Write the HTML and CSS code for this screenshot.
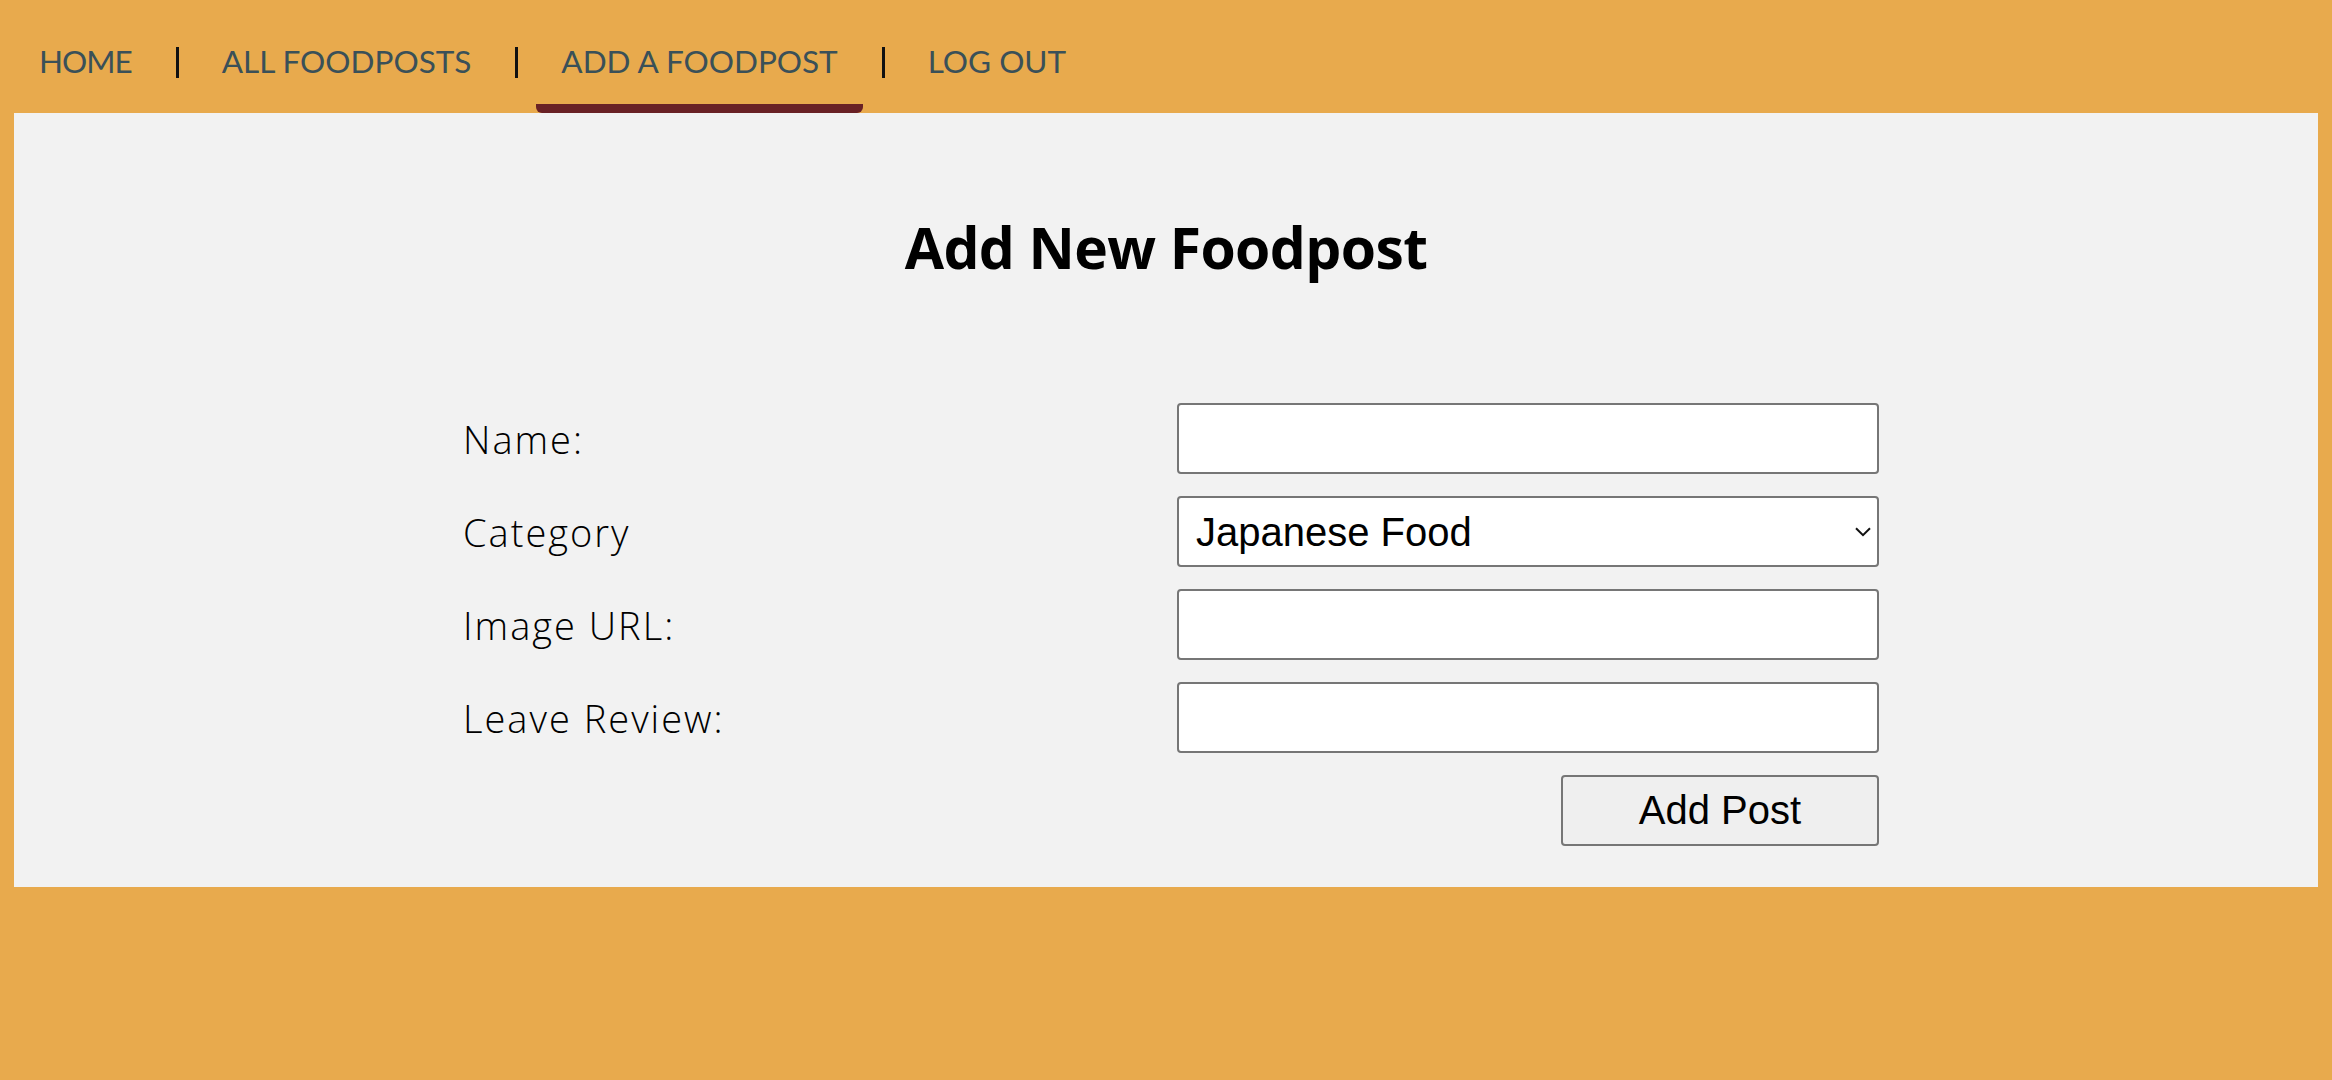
FILE: index.html
```html
<!DOCTYPE html>
<html lang="en">
<head>
<meta charset="utf-8">
<title>Add New Foodpost</title>
<link rel="stylesheet" href="styles.css">
</head>
<body>
  <nav class="nav">
    <a class="nav-link" href="#"><span class="nav-text">HOME</span></a>
    <span class="nav-sep"></span>
    <a class="nav-link" href="#"><span class="nav-text">ALL FOODPOSTS</span></a>
    <span class="nav-sep"></span>
    <a class="nav-link is-active" href="#"><span class="nav-text">ADD A FOODPOST</span></a>
    <span class="nav-sep"></span>
    <a class="nav-link" href="#"><span class="nav-text">LOG OUT</span></a>
  </nav>
  <main class="panel">
    <h1 class="title">Add New Foodpost</h1>
    <form class="form">
      <label class="form-label" for="name">Name:</label>
      <input class="field" id="name" type="text">
      <label class="form-label" for="category">Category</label>
      <div class="select-wrap">
        <select class="field field-select" id="category">
          <option>Japanese Food</option>
          <option>Italian Food</option>
          <option>Mexican Food</option>
        </select>
        <svg class="chevron" width="16" height="10" viewBox="0 0 16 10" aria-hidden="true"><path d="M1 1.2 L8 8.2 L15 1.2" fill="none" stroke="#111" stroke-width="2"/></svg>
      </div>
      <label class="form-label" for="image">Image URL:</label>
      <input class="field" id="image" type="text">
      <label class="form-label" for="review">Leave Review:</label>
      <input class="field" id="review" type="text">
      <button class="submit" type="submit">Add Post</button>
    </form>
  </main>
</body>
</html>
```
FILE: styles.css
```css
html, body {
  margin: 0;
  padding: 0;
}
body {
  background: #e8aa4d;
  padding: 0 14px;
  min-height: 1080px;
  box-sizing: border-box;
}
.nav {
  display: flex;
  height: 113px;
}
.nav-link {
  display: flex;
  flex-direction: column;
  height: 113px;
  text-decoration: none;
  color: #3a5058;
  font-family: "Lato", sans-serif;
  font-size: 31.5px;
  font-weight: 400;
}
.nav-link:first-child .nav-text {
  letter-spacing: -1px;
}
.nav-text {
  flex: 1;
  display: flex;
  align-items: center;
  padding: 18px 25px 0;
  white-space: nowrap;
}
.nav-link::after {
  content: "";
  height: 9px;
  border-radius: 0 0 6px 6px;
}
.nav-link.is-active::after {
  background: #692125;
}
.nav-sep {
  width: 3px;
  height: 31px;
  margin: 47px 18px 0 19px;
  background: #111;
}
.panel {
  background: #f2f2f2;
  padding: 105px 0 41px;
}
.title {
  margin: 0;
  text-align: center;
  font-family: "Open Sans", sans-serif;
  font-weight: 700;
  font-size: 57px;
  letter-spacing: -0.6px;
  line-height: 58px;
  color: #000;
}
.form {
  display: grid;
  grid-template-columns: 714px 702px;
  grid-auto-rows: 71px;
  row-gap: 22px;
  align-items: center;
  width: 1416px;
  margin: 127px 0 0 449px;
}
.form-label {
  font-family: "Open Sans", sans-serif;
  font-weight: 300;
  font-size: 38px;
  letter-spacing: 2px;
  color: #000;
}
.field {
  box-sizing: border-box;
  width: 702px;
  height: 71px;
  border: 2px solid #767676;
  border-radius: 4px;
  background: #fff;
  font-family: "Liberation Sans", Arial, sans-serif;
  font-size: 40px;
  color: #000;
  padding: 0 17px;
  margin: 0;
}
.select-wrap {
  position: relative;
  height: 71px;
}
.field-select {
  appearance: none;
  -webkit-appearance: none;
  padding: 0 40px 0 17px;
}
.chevron {
  position: absolute;
  right: 8px;
  top: 31px;
  pointer-events: none;
}
.submit {
  grid-column: 2;
  justify-self: end;
  box-sizing: border-box;
  width: 318px;
  height: 71px;
  border: 2px solid #767676;
  border-radius: 4px;
  background: #efefef;
  font-family: "Liberation Sans", Arial, sans-serif;
  font-size: 40px;
  color: #000;
  padding: 0;
}
```
